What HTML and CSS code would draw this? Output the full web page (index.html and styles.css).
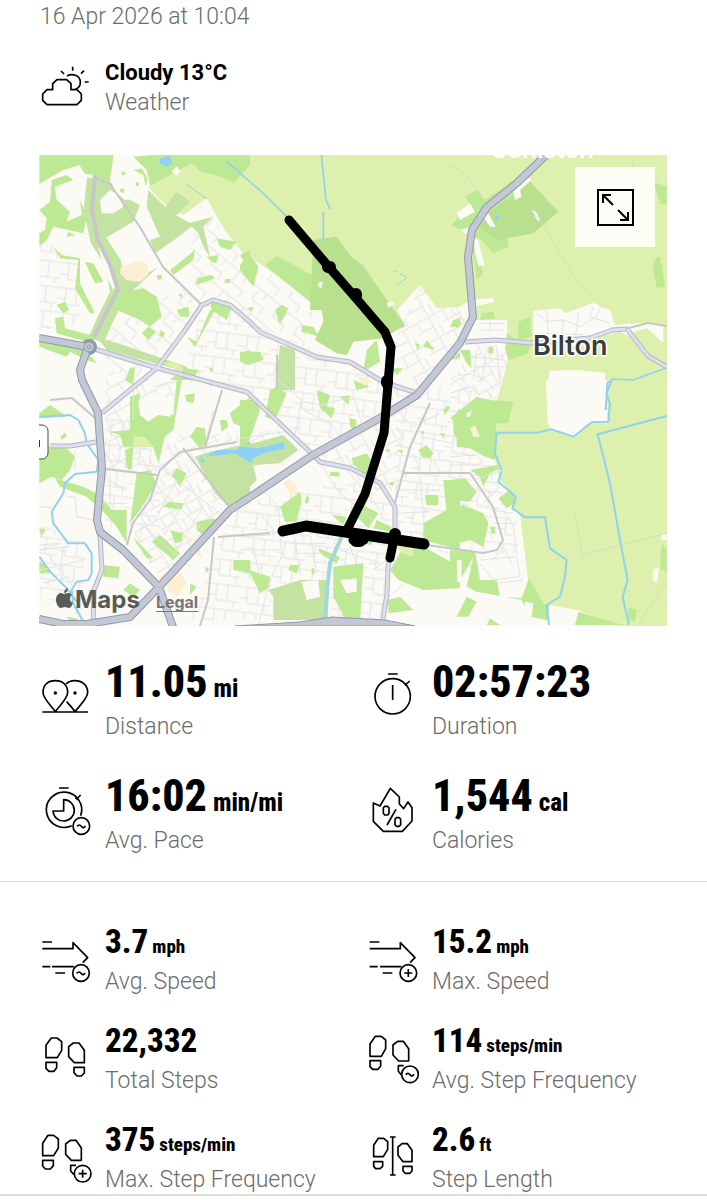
FILE: index.html
```html
<!DOCTYPE html>
<html lang="en">
<head>
<meta charset="utf-8">
<meta name="viewport" content="width=device-width, initial-scale=1">
<title>Workout summary</title>
<link rel="stylesheet" href="styles.css">
</head>
<body>
<main>
<header class="summary">
  <p class="date">16 Apr 2026 at 10:04</p>
  <section class="weather">
    <svg class="icon" viewBox="120 186 150 150" aria-hidden="true"><path d="M158 269v-18l13-12h29l13 12v18h18l13 13v19l-13 13h-90l-13-13v-19l13-13zM201 228c14-8 40-4 40 19 0 12-7 19-16 21M183 213l9 9M218 200v12M252 212l-9 9M254 246h12"/></svg>
    <div><strong class="condition">Cloudy 13°C</strong><p class="label">Weather</p></div>
  </section>
</header>

<section class="map" aria-label="Route map">
<svg class="map-art" viewBox="39 155 628 471" role="img" aria-label="Walking route near Bilton">
  <defs>
    <pattern id="streets-a" width="29" height="23" patternUnits="userSpaceOnUse" patternTransform="rotate(-29)"><path class="lane" d="M0 2H29M0 13H18M5 2V13M18 2V23M24 13V23"/></pattern>
    <pattern id="streets-b" width="31" height="25" patternUnits="userSpaceOnUse" patternTransform="rotate(7)"><path class="lane" d="M0 3H31M8 3V19H31M19 3V19M26 19V28M0 14H8"/></pattern>
    <pattern id="streets-c" width="27" height="25" patternUnits="userSpaceOnUse" patternTransform="rotate(40)"><path class="lane" d="M0 4H27M7 4V17M7 17H22V25M16 4V11"/></pattern>
  </defs>
  <rect class="town" x="39" y="155" width="628" height="471"/>
  <path fill="url(#streets-c)" d="M200 205L245 255 330 320 300 350 215 295 160 363 130 385 95 345 130 310 120 270 180 300Z"/>
  <path fill="url(#streets-b)" d="M40 240L80 260 80 325 40 330ZM180 380L205 300 245 320 350 365 415 395 310 450 245 395ZM395 400L433 385 500 395 495 465 528 580 430 560 395 530ZM235 505L350 480 390 500 390 620 190 620ZM105 415H160V545L105 525ZM40 525L85 540 85 620 40 600Z"/>
  <path fill="url(#streets-a)" d="M390 350L420 285 465 310 465 340 420 390ZM170 435L285 430 230 500 165 580 130 545ZM475 345H510V380L495 400 450 385ZM320 455L410 405 390 500ZM105 370L180 385 150 480 105 470Z"/>
  <path class="farm" d="M148 187L163 203 183 215 207 198 217 217 227 233 243 253 265 267 313 303 405 325 397 310 420 285 437 308 460 307 470 300 493 298 494 302 477 306 475 320H507L508 358 503 380 497 400 497 433 495 460 500 480 517 497 513 508 520 513 528 580 543 603 577 610 620 626H667V155H210L190 163Z"/>

  <!-- woods and parkland, north west -->
  <g transform="translate(30 150) scale(.33333)">
    <path class="grass" d="M370 15H660V45L612 100 560 75 515 66 485 40 360 108 350 60 310 20ZM28 15H250L240 100 195 75 165 72 148 45 95 62 28 102Z"/>
    <path class="corridor" d="M195 85L185 180 205 270 250 340 265 430 225 510 198 570"/>
    <path class="park" d="M190 70L240 95 300 150 330 165 310 215 225 265 190 250ZM390 260L350 170 355 120 420 185 490 225 440 265 375 310 360 270ZM400 180L440 125 480 155 440 195ZM270 370L310 395 385 350 300 430 270 440ZM200 560L280 585 470 650 490 695 430 655 230 600ZM475 220L550 200 520 230 540 320 525 300 505 250Z"/>
    <path class="town" d="M240 80L265 45 300 30 340 50 358 85 350 125 320 145 285 150 255 125ZM210 150L240 120 265 135 280 170 250 190 215 190ZM205 290L225 310 255 410 250 420 225 370Z"/>
    <path class="grass" d="M28 180L60 155 65 90 110 75 130 90 75 110 80 150 120 185 110 215 155 195 150 150 170 200 160 250 70 230 50 270 28 290V250L45 240 50 205ZM115 245L135 255 110 262ZM70 290L95 315 150 325 150 400 195 490 180 490 135 415 145 330 90 325ZM245 435L340 415 380 440 395 500 360 530 330 510 260 480ZM165 335L190 340 220 395 195 400 180 370ZM440 345L495 300 490 330 430 375 420 360ZM380 200L400 195 410 240 385 250ZM335 550L355 530 378 545 355 570ZM470 560L500 575 540 480 555 480 495 590ZM530 320L565 315 560 340 545 335ZM560 265L620 275 600 300 570 290ZM630 315L660 300V370ZM540 450L605 475 590 510 545 480ZM80 465L105 455 118 480 100 490ZM75 505L100 500 105 535 200 560 185 580 80 550ZM28 560L160 590 200 640 170 630 120 605 110 620 28 590ZM275 65h10v10h-10zM272 115l12 2-3 12-12-4zM320 95l8 3-2 12-10-4zM310 60l25-5 18 30-5 25-8-35zM270 190L290 180 305 200 285 205ZM300 655L315 650 310 705 285 690ZM390 540l15 8-5 14-12-5zM440 480L475 470 478 500 450 500ZM500 385L545 375 555 385 500 405ZM630 610L660 600V645L630 630ZM420 690L460 655 505 660 490 690ZM380 376l14-2 3 12-14 4zM445 430l12 4-4 12zM585 388l18-2-5 14-14-2zM535 655h16l-6 12z"/>
    <path class="sand" d="M272 350L330 330 350 345 355 375 330 395 290 390 270 370Z"/><path class="farm" d="M400 640L430 635 460 655 455 667Z"/>
    <path class="pond" d="M390 25L420 18 427 40 410 50 390 40Z"/><path class="town" d="M425 65L440 48 452 65 440 78Z"/>
    <path class="brook" d="M468 103L532 147"/>
  </g>
  <g transform="translate(240 150) scale(.33333)">
    <path class="grass" d="M75 345L110 318 235 385 215 460ZM345 330L370 345 495 530 450 545 390 440ZM0 345L25 310 55 350 40 410 0 360ZM105 480L125 465 145 475 120 525ZM20 475l20-5-5 15zM380 600L410 570 420 635 370 665ZM550 590L560 570 585 600ZM640 510L660 505V530L630 530ZM0 605L60 605 70 630 25 645 0 635ZM340 690L390 710 350 720ZM185 525L220 530 240 560 185 545ZM455 655L490 655 470 675ZM630 630L660 605V625ZM525 580l14 3-5 20z"/>
    <path class="forest" d="M220 270L290 260 325 310 380 370 495 525 430 565 340 575 320 615 290 610 225 570 250 515 245 480 210 480Z"/>
    <path class="park" d="M120 585L165 600 165 720H105Z"/><path class="town" d="M237 395l12 2-5 18-10-7zM440 460L455 452 464 462 445 473ZM200 520L240 480 250 510 230 550 220 525Z"/>
    <path class="river" d="M-40 35L70 130 140 200M244 15L258 150 270 178M250 185L250 268"/><path class="brook" d="M345 330L378 365M460 362l10 5M480 370L500 383 470 407"/>
    <path class="sand" d="M345 675L380 685 400 700 370 705Z"/>
  </g>
  <g transform="translate(450 150) scale(.33333)">
    <path class="grass" d="M45 140L80 120 105 150 200 85 240 90 170 180 175 290 130 310 95 270 70 260 90 340 100 370 80 390 60 240 20 235 5 225 30 195 75 185ZM620 320L630 320 645 410 620 415 608 345ZM610 95L650 110V165L630 160ZM95 490L130 485 135 505 90 510ZM205 515L240 500 245 560 205 570ZM10 515L25 505 35 520 20 535ZM30 600L60 600 65 655 50 640ZM115 590h14v20h-14zM170 550L200 570 240 585 235 610 175 630 165 595Z"/>
    <path class="forest" d="M230 80L250 105 325 185 250 250 140 270 90 235 110 190 205 130Z"/>
    <path class="town" d="M20 190L60 160 75 185 30 210ZM100 200L115 190 137 230 120 230ZM35 240L60 230 60 250 40 250ZM70 265L85 270 103 345 85 348 75 310ZM190 125L235 80 245 90 210 120 215 140 195 150ZM245 180L258 185 272 212 262 212ZM250 482L330 475 345 490 430 458 480 480 495 525 590 518 640 525V580L620 560 590 535 550 545 545 565 600 610 560 570 510 545 440 560 385 590 330 580 250 575Z"/>
    <path class="street" d="M260 490L290 515 340 510 390 530 440 500 455 465M290 480L295 560M340 510L335 560M385 490L375 575M430 470L420 500 480 520M260 550L330 550 400 555M95 520H165M95 540H160M120 515V545M60 620L160 630M80 600L70 690M110 590L95 700M140 590L150 700M70 650H160M0 480L50 520 20 590M0 690C50 650 120 690 130 720"/>
    <path class="town" d="M298 662L380 660 465 668 470 820 295 820 290 750Z"/>
    <path class="pond" d="M135 200l10-4 4 12-12 4z"/><path class="track" d="M0 45Q60 70 95 140M230 170Q270 200 330 310T470 480M540 170L550 20"/>
  </g>
  <g transform="translate(30 380) scale(.33333)">
    <path class="grass" d="M28 100L60 75 95 98 110 110 28 115ZM28 195L110 205 135 230 120 270 95 300 65 290 28 310ZM75 295L160 320 210 345 245 390 290 390 290 490 260 440 225 400 170 350 90 320ZM300 50L330 40 325 80 430 105 440 0 455 0 430 150 405 170 385 250 370 200 280 200 270 165 235 155 300 150ZM500 140L525 145 530 190 510 205 480 170ZM570 120h20l5 20-20 15zM465 45L495 40 490 70 470 65ZM600 100L660 50V150L610 130ZM425 285L440 265 470 280 450 320ZM365 485L390 465 450 520 430 540ZM420 450L460 460 455 485 435 490ZM500 425L555 415 560 440 530 475 500 450ZM415 365L460 370 455 390 400 380ZM310 470L370 535 350 535 320 490ZM220 555L270 560 265 595 220 590ZM320 280L360 270 380 310 330 390 300 430 310 360ZM610 540H660V580L610 570ZM480 610L500 620 480 645ZM28 445l20 5-15 20zM90 170l15-12 6 10-15 12zM525 560l15 8-12 10zM300 610L330 630 310 650 280 630ZM110 710L140 715 155 735 130 735ZM28 545L55 560 60 580 28 580ZM285 210L310 200 305 270 290 265Z"/>
    <path class="town" d="M325 60L345 52 400 42 430 70 420 110 385 105 355 125 330 105Z"/>
    <path class="park" d="M495 230L540 215 660 190V345L600 385 555 340Z"/><path class="farm" d="M310 170L345 170 370 200 310 200Z"/>
    <path class="sand" d="M410 590L450 575 470 610 440 650 410 625ZM470 465L490 475 485 490 465 475ZM505 500L520 535 500 525ZM385 590L405 580 395 610Z"/>
    <path class="pond" d="M525 230L560 210 620 210 640 190 660 185V240L630 235 620 220ZM510 225L525 245 515 250Z"/>
    <path class="stream" d="M28 110L120 105 145 120 165 160 170 190 205 240 200 275 135 282 105 310 100 340 65 395 70 430 115 490 165 490 185 520 185 580 175 600 140 605 125 630 130 670 165 735M28 530L60 575 110 625 145 670"/>
    <path class="street" d="M28 380L65 383M135 210V270M28 495L90 490 30 510 120 500M100 500L90 580M50 520L130 620M30 570L160 540M40 610L120 590M550 90L525 200M500 210L560 180M400 270L570 400M390 330L520 450M330 430L480 560M440 300L370 430M480 340L400 470M520 380L440 510M110 350H135L140 410 190 420M215 290L290 330M240 280V380M220 370H290M370 20L450 0M310 0V120"/>
  </g>
  <g transform="translate(240 380) scale(.33333)">
    <path class="grass" d="M0 60L50 60 60 90 25 190 0 200ZM90 30L110 20 140 40 105 120 75 110ZM230 30L270 45 260 80 285 85 275 115 240 85ZM300 50L330 45 325 75ZM330 115l20 5-5 30-15-10zM335 235L380 220 400 250 380 285 340 255ZM120 380L180 335 185 360 170 425 135 425 130 410ZM270 275h25l5 15-30-2zM370 375L415 400 385 445 350 410ZM410 420L455 440 450 455 400 445ZM600 160h15l-4 15zM535 210L560 195 580 220 570 235 545 230ZM610 300H660V400H620ZM555 345H595V375H560ZM550 430L620 390 660 375V510L550 480ZM450 570L490 500 550 500 660 560V625L550 630 475 600ZM445 660L480 650 520 690 445 700ZM25 570L90 590 90 620 60 640ZM280 560L370 550 360 735 325 735 280 650ZM150 555L180 555 170 580 145 570ZM235 505L300 530 290 550 240 520ZM360 450L400 470 395 495 355 490ZM275 405L320 410 310 435ZM435 210l14-4-2 12zM470 210h18v12zM640 120L660 80V190L640 160ZM610 90l14-15 5 10-15 20zM540 155l12-2v12zM445 308l20-3-8 14zM200 345l8 8-6 20-8-6zM215 565h8v18h-8z"/>
    <path class="park" d="M0 200L130 165 155 190 175 210 120 250 40 255 50 300 20 330 0 350ZM85 630L180 600 270 600 250 720H100L100 650Z"/>
    <path class="farm" d="M470 500L520 500 520 530 485 520Z"/><path class="sand" d="M130 310L145 295 175 325 155 350Z"/>
    <path class="pond" d="M0 200L55 205 130 185 135 205 70 220 40 235 35 250 0 230Z"/><path class="canal" d="M305 470L270 550 262 620 255 735"/>
    <path class="town" d="M185 605L235 600 240 650 200 660ZM300 600L350 595 350 635 320 640Z"/><path class="track" d="M575 560L600 545 615 560 605 590 580 595Z"/>
    <path class="street" d="M0 470L90 465 125 450M120 460L125 530 90 600 55 735M70 330L115 380 120 445M185 60L165 165M115 0L190 65 240 75 340 50M340 50L365 130M0 175L135 155M240 250L300 340 400 420M310 255L420 390M60 400L100 450M150 490H260M170 520H250M160 450L180 580M210 460L230 580M0 510H120M40 500L60 590M450 650L490 610M310 180L270 130 190 90M520 140L600 100M540 170L640 190M520 220L540 270M580 240L600 275M480 330H600M470 400L570 395M540 290L550 410M400 570L440 540M300 510L420 550M330 500L350 550"/>
  </g>
  <g transform="translate(450 380) scale(.33333)">
    <path class="grass" d="M0 115L80 50 120 60 190 65 175 130 140 130 135 240 95 225 60 205 20 200 20 130ZM60 270L145 255 150 265 120 280 100 320 90 290ZM0 300L45 295 80 335 60 365 0 360ZM145 355L180 330 190 345 200 365 170 385ZM0 385L40 375 100 400 115 430 100 500 60 480 0 495ZM0 510L75 515 90 600 240 600 280 670 375 690 370 735 240 710 215 660 80 635 50 620 70 530 20 620 0 610ZM20 710L50 650 80 665 55 710ZM120 715L150 735H110ZM385 695L520 735H375ZM535 680L560 690 555 725 535 720ZM635 490L650 510V575L630 565ZM120 440h16v20h-12z"/>
    <path class="town" d="M50 100l15-8-5 18-10 2zM20 540L35 540 35 610 22 605ZM110 590L140 600 150 650 215 655 235 600 200 520 80 525 90 570ZM225 665L250 670 245 710 218 705ZM610 570L628 560 620 610 608 600ZM635 465L650 460V480H635Z"/><path class="sand" d="M60 145L75 135 90 170 70 170Z"/>
    <path class="town" d="M288 0H472V125L420 125 370 170 305 150 293 130ZM298 675L380 690 370 735H290Z"/>
    <path class="stream" d="M140 158H260L305 148 370 170 425 127 475 125 480 70 470 40 485 0M140 158L135 220 155 270 145 305 198 350 187 385 225 412H285L300 505 350 540 345 590 330 650 290 675 297 735M650 108L443 163 480 310 510 480 533 600 518 650 537 735M472 10L467 90"/>
    <path class="track" d="M375 400L397 525 650 460M565 735L625 640 650 610"/>
    <path class="street" d="M0 230L80 225 100 245 80 255H0M30 10L60 50M0 40L60 20 90 45M70 300L160 270M90 380L150 320M120 390L190 400M100 320L130 350M160 390L190 440 200 520M130 430L200 430M90 540L200 530 210 590 130 600 90 550M130 540L160 500 190 560M140 610L220 600"/>
  </g>
  <path class="river" transform="translate(450 150) scale(.33333)" d="M470 700L490 687 550 690 650 653"/>

  <!-- minor roads -->
  <path class="minor wide" d="M95 175L92 210 98 240 110 265 118 290 105 315 94 337"/>
  <path class="minor" d="M95 178L110 184 140 227 163 267 202 305M106 469L157 475M127 545L133 523 150 500 160 470 180 452 237 442M183 448L230 508M222 390L205 447M430 403L410 447 403 473 395 503M403 473H470L493 507 503 540 497 550 483 553 427 545M218 537L270 533M50 400L72 398 95 418M94 620V600M94 597L96 580M214 537L208 600 200 626"/>
  <path class="minor" d="M275 626L300 623M277 355V390"/>
  <!-- secondary roads -->
  <g class="secondary"><path id="sec" d="M88 347L157 368 247 392 273 417 310 452 320 462 350 468 380 483 395 507 395 533 388 567 387 593 383 620M102 413L130 390 157 368 183 333 202 305 213 300 230 305 250 322 260 332 283 342 317 357 350 362 383 382 417 393M50 446L70 446 96 442M100 535L102 570 94 590 93 626M465 342L495 340 530 343 590 338 612 330 627 329 648 356 667 367"/></g>
  <use class="secondary-fill" href="#sec"/>
  <path class="minor" d="M625 329L648 323 667 326"/>
  <!-- trunk roads -->
  <g class="trunk"><path id="trunk" d="M39 338L88 347 80 370 82 380 98 413 102 468 97 520 100 532 123 550 159 587 174 630M39 619L63 624 87 624 130 617 159 587 230 510 250 497 313 455 380 418 417 395 460 343 473 317 468 257 472 230 487 207 517 183 546 155"/><circle cx="89" cy="347" r="4"/></g>
  <use class="trunk-fill" href="#trunk"/>
  <circle class="roundabout" cx="89" cy="347" r="5"/><circle class="roundabout" cx="89" cy="347" r="2"/>
  <path class="trunk-area" d="M235 626L300 622 332 617 385 620 415 626Z"/>

  <rect class="shield" x="24" y="425" width="24" height="34" rx="6"/><path class="shield-mark" d="M39 440v7"/>
  <path class="route" d="M289 220L328 266 355 297 385 332 391 347 384 433 365 494 347 530M353 540L364 540M395 534L390 558"/>
  <path class="route-wide" d="M283 531L306 526 424 544"/>
  <path class="route-knots" d="M328 267h2M356 294v2M387 381v2M395 534v1M356 541h4"/>
  <text class="place town-name" x="533" y="355">Bilton</text>
  <text class="place village-name" x="490" y="158">Coniston</text>
</svg>
<button class="expand" type="button" aria-label="Expand map"><svg viewBox="0 0 37 37" aria-hidden="true"><path d="M1 1H36V36H1ZM16 16L6 6M6 14V6H14M21 21L31 31M31 23V31H23"/></svg></button>
<div class="credit"><span class="brand"><svg viewBox="0 0 17 20" aria-hidden="true"><path d="M12 0c0 3-2 5-4 5 0-3 2-4 4-5zM8 6c1 0 2-1 4-1 2 0 3 1 4 2-3 2-3 6 1 8-1 3-3 5-4 5-2 0-2-1-4-1s-3 1-4 1C2 20 0 15 0 12c0-5 3-7 5-7 1 0 2 1 3 1z"/></svg>Maps</span><a href="#legal">Legal</a></div>
</section>

<section class="stats primary" aria-label="Main results">
  <article class="stat"><svg class="icon" viewBox="30 60 150 150" aria-hidden="true"><path d="M76 185C65 168 39 147 39 127 39 105 54 92 76 92s37 13 37 35c0 20-26 41-37 58zM108 102c7-7 15-10 26-10 23 0 39 14 39 35 0 20-26 41-38 58-7-11-16-20-25-30M37 186H174"/><path class="dot" d="M76 129h.1M135 129h.1"/></svg><div><p class="value">11.05 <small>mi</small></p><p class="label">Distance</p></div></article>
  <article class="stat"><svg class="icon" viewBox="21 60 150 150" aria-hidden="true"><circle cx="98" cy="139" r="53"/><path d="M84 72h29M98 105v45M136 105l13-12M134 101l7 7"/></svg><div><p class="value">02:57:23</p><p class="label">Duration</p></div></article>
  <article class="stat"><svg class="icon" viewBox="30 402 150 150" aria-hidden="true"><path d="M125 527A53 53 0 1 1 152 497M87 414h29M139 448l13-13M136 442l8 8M101 449v34H69a32 32 0 1 0 32-34z"/><circle cx="154" cy="528" r="25"/><path d="M141 529q7-8 13 0t12-1"/></svg><div><p class="value">16:02 <small>min/mi</small></p><p class="label">Avg. Pace</p></div></article>
  <article class="stat"><svg class="icon" viewBox="21 402 150 150" aria-hidden="true"><path d="M91 415L118 441V462L131 476 144 456 156 473V513L127 544H70L40 514V459L60 468ZM108 478L81 525M74 469h9l4 5v16l-4 5h-9l-4-5v-16zM109 503h9l4 5v16l-4 5h-9l-4-5v-16z"/></svg><div><p class="value">1,544 <small>cal</small></p><p class="label">Calories</p></div></article>
</section>
<hr>
<section class="stats detail" aria-label="Detailed results">
  <article class="stat"><svg class="icon" viewBox="30 85 150 150" aria-hidden="true"><path d="M37 97h29M37 117h92V99L173 144 158 159M37 171h24M66 171h66M76 190h29"/><circle class="badge" cx="153" cy="190" r="25"/><path d="M140 191q7-8 13 0t12-1"/></svg><div><p class="value">3.7 <small>mph</small></p><p class="label">Avg. Speed</p></div></article>
  <article class="stat"><svg class="icon" viewBox="21 85 150 150" aria-hidden="true"><path d="M29 97h29M29 117h92V99L165 144 150 159M29 171h24M60 171h64M68 190h29"/><circle class="badge" cx="145" cy="190" r="25"/><path d="M133 190h24M145 178v24"/></svg><div><p class="value">15.2 <small>mph</small></p><p class="label">Max. Speed</p></div></article>
  <article class="stat"><svg class="icon" viewBox="30 382 150 150" aria-hidden="true"><path d="M48 444V407L64 385H81L95 396V422L82 444ZM48 458H80V474L72 485H57L48 476ZM163 459V422L147 400H130L116 411V441L133 459ZM132 473H163V490L154 499H141L132 489Z"/></svg><div><p class="value">22,332</p><p class="label">Total Steps</p></div></article>
  <article class="stat"><svg class="icon" viewBox="21 382 150 150" aria-hidden="true"><path d="M30 440V403L46 380H64L77 391V417L64 440ZM30 453H62V469L54 479H38L30 471ZM146 454V417L130 395H113L99 406V436L116 454ZM131 468H115V485L124 496"/><circle class="badge" cx="150" cy="494" r="25"/><path d="M137 495q7-8 13 0t12-1"/></svg><div><p class="value">114 <small>steps/min</small></p><p class="label">Avg. Step Frequency</p></div></article>
  <article class="stat"><svg class="icon" viewBox="30 679 150 150" aria-hidden="true"><path d="M38 738V701L54 677H71L85 688V715L71 738ZM38 752H70V768L61 778H46L38 769ZM154 752V715L138 692H121L107 703V734L124 752ZM138 767H122V784L132 795"/><circle class="badge" cx="158" cy="792" r="25"/><path d="M146 792h24M158 780v24"/></svg><div><p class="value">375 <small>steps/min</small></p><p class="label">Max. Step Frequency</p></div></article>
  <article class="stat"><svg class="icon" viewBox="21 679 150 150" aria-hidden="true"><path d="M41 741V707L55 686H71L83 696V719L70 741ZM41 756H68V770L60 777H47L41 770ZM156 756V722L142 702H126L114 712V737L129 756ZM129 770H156V784L149 791H136L129 784ZM98 682V796M90 682h17M90 796h17"/></svg><div><p class="value">2.6 <small>ft</small></p><p class="label">Step Length</p></div></article>
</section>
</main>
</body>
</html>
```

FILE: styles.css
```css
* { box-sizing: border-box; }
body { margin: 0; background: #fff; color: #000; font-family: Roboto, "Liberation Sans", sans-serif; }
p { margin: 0; }
.summary { padding: 0 40px; }
.date, .label { color: #6c6c6c; font-size: 23px; font-weight: 300; line-height: 28px; }
.date { line-height: 34px; }
.weather { display: flex; gap: 15px; margin-top: 24px; }
.weather .icon { margin-top: 4px; }
.weather .label { line-height: 30px; }
.condition { display: block; font-size: 22px; line-height: 30px; }
.icon { flex: none; width: 50px; height: 50px; overflow: visible; fill: none; stroke: #000; stroke-width: 5; stroke-linejoin: round; }
.icon .dot { stroke-width: 10; stroke-linecap: round; }
.icon .badge { fill: #fff; }

.map { position: relative; margin: 37px 40px 0 39px; }
.map-art { display: block; width: 100%; height: auto; }
.town { fill: #fbfaf5; }
.farm { fill: #def0ad; }
.grass { fill: #bee994; }
.park { fill: #c4e3a3; }
.forest { fill: #b9e08f; }
.sand { fill: #fcefd2; }
.pond { fill: #8dd2f6; }
.corridor { fill: none; stroke: #c4e5a2; stroke-width: 48; }
.lane, .street, .track { fill: none; stroke: #e4e1e5; stroke-width: 1; }
.street { stroke-width: 3; }
.track { stroke: #cfd5c8; stroke-width: 2; }
.river, .brook, .stream, .canal { fill: none; stroke: #8fd3ee; stroke-width: 5; stroke-linejoin: round; }
.brook { stroke-width: 3; }
.stream { stroke-width: 6; }
.canal { stroke: #a2d8d6; stroke-width: 12; }
.minor { fill: none; stroke: #c6c7cb; stroke-width: 2; stroke-linejoin: round; }
.minor.wide { stroke-width: 4; }
.secondary, .secondary-fill, .trunk, .trunk-fill { fill: none; stroke-linejoin: round; }
.secondary { stroke: #b4b8c6; stroke-width: 5; }
.secondary-fill { stroke: #dde0ea; stroke-width: 3; }
.trunk { stroke: #9198ae; stroke-width: 8; }
.trunk-fill { stroke: #c3c8d5; stroke-width: 6; }
/* <use> copies sit above their casings and take the narrower stroke */
.roundabout { fill: #c3c8d5; stroke: #9198ae; stroke-width: 1; }
.trunk-area { fill: #c3c8d5; stroke: #9198ae; }
.shield { fill: #fff; stroke: #4b4b4b; stroke-width: 1; }
.shield-mark { stroke: #333; stroke-width: 2; }
.route, .route-wide, .route-knots { fill: none; stroke: #000; stroke-width: 9; stroke-linecap: round; stroke-linejoin: round; }
.route-wide { stroke-width: 11; }
.route-knots { stroke-width: 12; }
.place { font-family: Inter, "Liberation Sans", sans-serif; font-size: 27px; font-weight: 600; paint-order: stroke; stroke: #fff; stroke-width: 3; fill: #3b3b3d; }
.village-name { font-size: 24px; fill: #fff; stroke: none; }
.expand { position: absolute; top: 12px; right: 12px; display: grid; place-items: center; width: 80px; height: 80px; padding: 0; border: 0; background: #fcfdf5; cursor: pointer; }
.expand svg { width: 37px; height: 37px; fill: none; stroke: #000; stroke-width: 2; }
.credit { position: absolute; left: 17px; bottom: 10px; display: flex; align-items: baseline; gap: 16px; color: #5a5a58; font-family: Inter, "Liberation Sans", sans-serif; }
.brand { font-size: 24px; font-weight: 700; line-height: 32px; }
.brand svg { width: 17px; height: 20px; margin-right: 2px; fill: currentColor; }
.credit a { color: #777; font-size: 16px; font-weight: 700; text-underline-offset: 3px; }

.stats { display: grid; grid-template-columns: 1fr 1fr; column-gap: 27px; padding: 0 40px; }
.stat { display: flex; gap: 15px; min-width: 0; }
.value { display: flex; align-items: baseline; gap: 6px; font-family: "Roboto Condensed", "Liberation Sans", sans-serif; font-weight: 800; white-space: nowrap; }
.value small { line-height: 1; }
.stat .label { margin-top: 6px; white-space: nowrap; }
.primary { row-gap: 30px; margin-top: 31px; }
.primary .icon { margin-top: 13px; }
.primary .value { font-size: 44px; line-height: 50px; }
.primary small { font-size: 25px; }
.detail { row-gap: 25px; border-bottom: 2px solid #ddd; }
.detail .icon { margin-top: 16px; }
.detail .value { gap: 4px; font-size: 33px; line-height: 40px; }
.detail small { font-size: 19px; }
hr { margin: 26px 0 40px; border: 0; border-top: 1px solid #ddd; }
```
